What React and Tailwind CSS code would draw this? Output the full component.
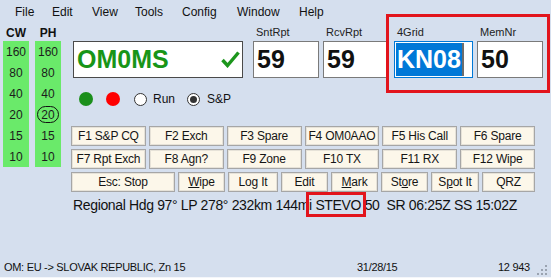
import React from "react";

const menu = [
  ["File", "w-[37px]"],
  ["Edit", "w-[40px]"],
  ["View", "w-[43px]"],
  ["Tools", "w-[47px]"],
  ["Config", "w-[55px]"],
  ["Window", "w-[62px]"],
  ["Help", "w-[40px]"],
];

const bands = ["160", "80", "40", "20", "15", "10"];

const fkeys = [
  ["F1 S&P CQ", "F2 Exch", "F3 Spare", "F4 OM0AAO", "F5 His Call", "F6 Spare"],
  ["F7 Rpt Exch", "F8 Agn?", "F9 Zone", "F10 TX", "F11 RX", "F12 Wipe"],
];

function Btn({ children, className = "" }) {
  return (
    <div
      className={
        "h-[20px] flex items-center justify-center bg-[#fcf7ea] border border-[#a6a6a6] shadow-[inset_0_0_0_1px_#e6e2d8] text-[12px] tracking-[-0.2px] text-[#151515] " +
        className
      }
    >
      {children}
    </div>
  );
}

function BandCol({ label, circled }) {
  return (
    <div className="flex flex-col w-[26px]">
      <div className="h-[17px] flex items-center justify-center text-[12px] font-bold text-[#111]">
        {label}
      </div>
      <div className="h-[126px] bg-[#6aea6a] flex flex-col pt-[1px]">
        {bands.map((b) => (
          <div key={b} className="h-[21px] flex items-center justify-center text-[12px] text-[#1c1c1c]">
            {b === circled ? (
              <span className="w-[22px] h-[17px] rounded-full border border-[#111] flex items-center justify-center">
                {b}
              </span>
            ) : (
              b
            )}
          </div>
        ))}
      </div>
    </div>
  );
}

function Field({ label, width, border = "border-[#7a7a7a]", children, ml = "" }) {
  return (
    <div className={"flex flex-col " + ml}>
      <div className="h-[17px] flex items-center pl-[3px] text-[11px] text-[#222]">{label}</div>
      <div className={"h-[37px] bg-white border flex items-center pl-[3px] " + width + " " + border}>
        {children}
      </div>
    </div>
  );
}

export default function App() {
  return (
    <div className="w-[551px] h-[278px] bg-[#d5dfee] flex flex-col font-['Liberation_Sans',Arial,sans-serif] text-[#111] overflow-hidden">
      {/* menu */}
      <div className="h-[24px] flex items-center pl-[15px] text-[12px] text-[#111]">
        {menu.map(([m, w]) => (
          <div key={m} className={w}>
            {m}
          </div>
        ))}
      </div>

      <div className="flex pl-[3px]">
        {/* band columns */}
        <div className="flex gap-[6px]">
          <BandCol label="CW" />
          <BandCol label="PH" circled="20" />
        </div>

        <div className="flex flex-col ml-[10px]">
          {/* entry fields */}
          <div className="flex ml-[2px]">
            <div className="flex flex-col">
              <div className="h-[17px]" />
              <div className="h-[37px] w-[170px] bg-white border border-[#4a4a4a] flex items-center justify-between pl-[3px] pr-[2px]">
                <span className="text-[25px] font-bold text-[#189518] leading-none">OM0MS</span>
                <svg width="19" height="17" viewBox="0 0 19 17">
                  <path d="M1.5 9 L6.5 14.5 L17.5 1.5" fill="none" stroke="#1c961c" strokeWidth="3.4" />
                </svg>
              </div>
            </div>
            <Field label="SntRpt" width="w-[66px]" ml="ml-[10px]">
              <span className="text-[25px] font-bold leading-none">59</span>
            </Field>
            <Field label="RcvRpt" width="w-[65px]" ml="ml-[4px]">
              <span className="text-[25px] font-bold leading-none">59</span>
            </Field>
            <div className="relative flex ml-[6px]">
              <Field label="4Grid" width="w-[79px]" border="border-[#0078d7]">
                <span className="h-[33px] flex items-center bg-[#0078d7] text-white text-[25px] font-bold leading-none pl-[1px] pr-[1px] -ml-[2px]">
                  KN08
                </span>
                <span className="w-[2px] h-[33px] bg-[#6d6d6d]" />
              </Field>
              <Field label="MemNr" width="w-[66px]" ml="ml-[4px]">
                <span className="text-[25px] font-bold leading-none">50</span>
              </Field>
              <div className="absolute left-[-8px] right-[-7px] top-[-10px] bottom-[-15px] border-[3px] border-[#e2141c]" />
            </div>
          </div>

          {/* dots and radios */}
          <div className="h-[16px] mt-[13px] flex items-center ml-[8px] text-[12px]">
            <span className="w-[14px] h-[14px] rounded-full bg-[#1b8f1b]" />
            <span className="w-[14px] h-[14px] rounded-full bg-[#ff0000] ml-[13px]" />
            <span className="w-[13px] h-[13px] rounded-full bg-white border border-[#333] ml-[14px]" />
            <span className="ml-[6px]">Run</span>
            <span className="w-[13px] h-[13px] rounded-full bg-white border border-[#333] ml-[12px] flex items-center justify-center">
              <span className="w-[7px] h-[7px] rounded-full bg-[#333]" />
            </span>
            <span className="ml-[7px]">S&amp;P</span>
          </div>

          {/* buttons */}
          <div className="mt-[19px] w-[464px] flex flex-col gap-[3px]">
            {fkeys.map((row, i) => (
              <div key={i} className="grid grid-cols-6 gap-[3px]">
                {row.map((k) => (
                  <Btn key={k}>{k}</Btn>
                ))}
              </div>
            ))}
            <div className="flex gap-[3px]">
              <Btn className="w-[104px]">Esc: Stop</Btn>
              <Btn className="w-[47px]">
                <span className="underline">W</span>ipe
              </Btn>
              <Btn className="w-[50px]">Log It</Btn>
              <Btn className="w-[47px]">Edit</Btn>
              <Btn className="w-[47px]">
                <span className="underline">M</span>ark
              </Btn>
              <Btn className="w-[47px]">
                St<span className="underline">o</span>re
              </Btn>
              <Btn className="w-[48px]">
                S<span className="underline">p</span>ot It
              </Btn>
              <Btn className="w-[53px]">QRZ</Btn>
            </div>
          </div>

          {/* info line */}
          <div className="mt-[4px] h-[18px] leading-[18px] ml-[2px] flex items-center text-[14px] tracking-[-0.35px] text-[#111] whitespace-pre">
            <span>Regional Hdg 97° LP 278° 232km 144mi </span>
            <span className="relative">
              STEVO
              <span className="absolute left-[-9px] right-[-5px] top-[-4px] bottom-[-3px] border-[3px] border-[#e2141c]" />
            </span>
            <span> 50  SR 06:25Z SS 15:02Z</span>
          </div>
        </div>
      </div>

      {/* status bar */}
      <div className="mt-auto h-[21px] flex items-center pl-[4px] text-[11px] tracking-[-0.3px] text-[#111] border-b border-[#f4f6fa] whitespace-nowrap">
        <span className="w-[353px] shrink-0">OM: EU -&gt; SLOVAK REPUBLIC, Zn 15</span>
        <span className="w-[141px] shrink-0">31/28/15</span>
        <span className="shrink-0">12 943</span>
        <svg width="12" height="11" viewBox="0 0 12 11" className="ml-[6px] mt-[4px] shrink-0">
          <rect x="9" y="1" width="2" height="2" fill="#9aa3b0" />
          <rect x="5" y="5" width="2" height="2" fill="#9aa3b0" />
          <rect x="9" y="5" width="2" height="2" fill="#9aa3b0" />
          <rect x="1" y="9" width="2" height="2" fill="#9aa3b0" />
          <rect x="5" y="9" width="2" height="2" fill="#9aa3b0" />
          <rect x="9" y="9" width="2" height="2" fill="#9aa3b0" />
        </svg>
      </div>
    </div>
  );
}
